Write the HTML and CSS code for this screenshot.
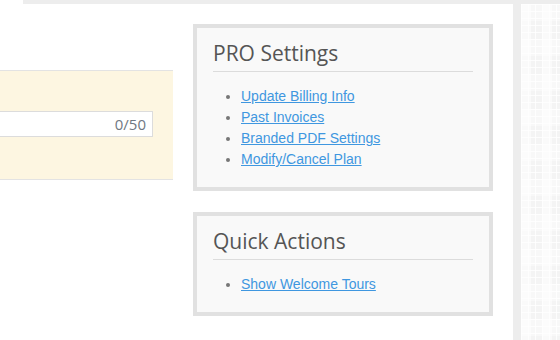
FILE: index.html
```html
<!DOCTYPE html>
<html lang="en">
<head>
    <meta charset="UTF-8">
    <meta name="viewport" content="width=device-width, initial-scale=1.0">
    <title>Account Settings</title>
    <link rel="stylesheet" href="styles.css">
</head>
<body>
    <div class="topbar"></div>
    <div class="layout">
        <div class="page">
            <div class="main">
                <div class="notice">
                    <div class="char-input">
                        <span class="counter">0/50</span>
                    </div>
                </div>
            </div>
            <div class="sidebar">
                <div class="panel">
                    <h3>PRO Settings</h3>
                    <ul>
                        <li><a href="#">Update Billing Info</a></li>
                        <li><a href="#">Past Invoices</a></li>
                        <li><a href="#">Branded PDF Settings</a></li>
                        <li><a href="#">Modify/Cancel Plan</a></li>
                    </ul>
                </div>
                <div class="panel">
                    <h3>Quick Actions</h3>
                    <ul>
                        <li><a href="#">Show Welcome Tours</a></li>
                    </ul>
                </div>
            </div>
        </div>
        <div class="gutter"></div>
        <div class="texture"></div>
    </div>
</body>
</html>
```

FILE: styles.css
```css
body {
    margin: 0;
    padding: 0;
    background: #fff;
    font-family: "Liberation Sans", Arial, sans-serif;
    height: 340px;
    overflow: hidden;
    display: flex;
    flex-direction: column;
}

.topbar {
    height: 4px;
    margin-left: 23px;
    background-color: #ededed;
}

.layout {
    display: flex;
    flex: 1;
}

.page {
    width: 513px;
    display: flex;
    align-items: flex-start;
}

.gutter {
    width: 8px;
    background-color: #ededed;
}

/* tiled background on the far right */
.texture {
    flex: 1;
    background-color: #f4f4f4;
    background-image:
        linear-gradient(90deg, rgba(255, 255, 255, 0.8) 1px, transparent 1px),
        linear-gradient(rgba(255, 255, 255, 0.8) 1px, transparent 1px),
        linear-gradient(90deg, rgba(255, 255, 255, 0.5) 50%, transparent 50%),
        linear-gradient(rgba(255, 255, 255, 0.4) 50%, transparent 50%);
    background-size: 7px 7px, 7px 7px, 21px 21px, 14px 35px;
}

.main {
    width: 173px;
    margin-top: 66px;
}

.notice {
    background-color: #fdf6e1;
    border-top: 1px solid #e3e3e3;
    border-bottom: 1px solid #e3e3e3;
    padding: 40px 20px 42px 0;
}

.char-input {
    height: 24px;
    background: #fff;
    border: 1px solid #dcdcdc;
    border-left: none;
    display: flex;
    align-items: center;
    justify-content: flex-end;
    padding-right: 6px;
}

.counter {
    font-family: "Open Sans", sans-serif;
    font-size: 15px;
    color: #6f7882;
}

.sidebar {
    width: 300px;
    margin-left: 20px;
    margin-top: 20px;
}

.panel {
    background-color: #f9f9f9;
    border: 4px solid #e1e1e1;
    padding: 11px 16px 17px 16px;
    margin-bottom: 21px;
}

.panel h3 {
    margin: 0;
    font-family: "Open Sans", sans-serif;
    font-size: 21px;
    font-weight: normal;
    line-height: 28px;
    color: #555;
    padding-bottom: 4px;
    border-bottom: 1px solid #dcdcdc;
}

.panel ul {
    margin: 14px 0 0 0;
    padding-left: 28px;
    list-style: none;
    font-size: 14px;
    line-height: 21px;
}

.panel li::before {
    content: "";
    display: inline-block;
    width: 4px;
    height: 4px;
    border-radius: 50%;
    background-color: #777;
    margin-left: -15px;
    margin-right: 11px;
    vertical-align: middle;
}

.panel a {
    color: #3f97e0;
    text-decoration: underline;
}
```
